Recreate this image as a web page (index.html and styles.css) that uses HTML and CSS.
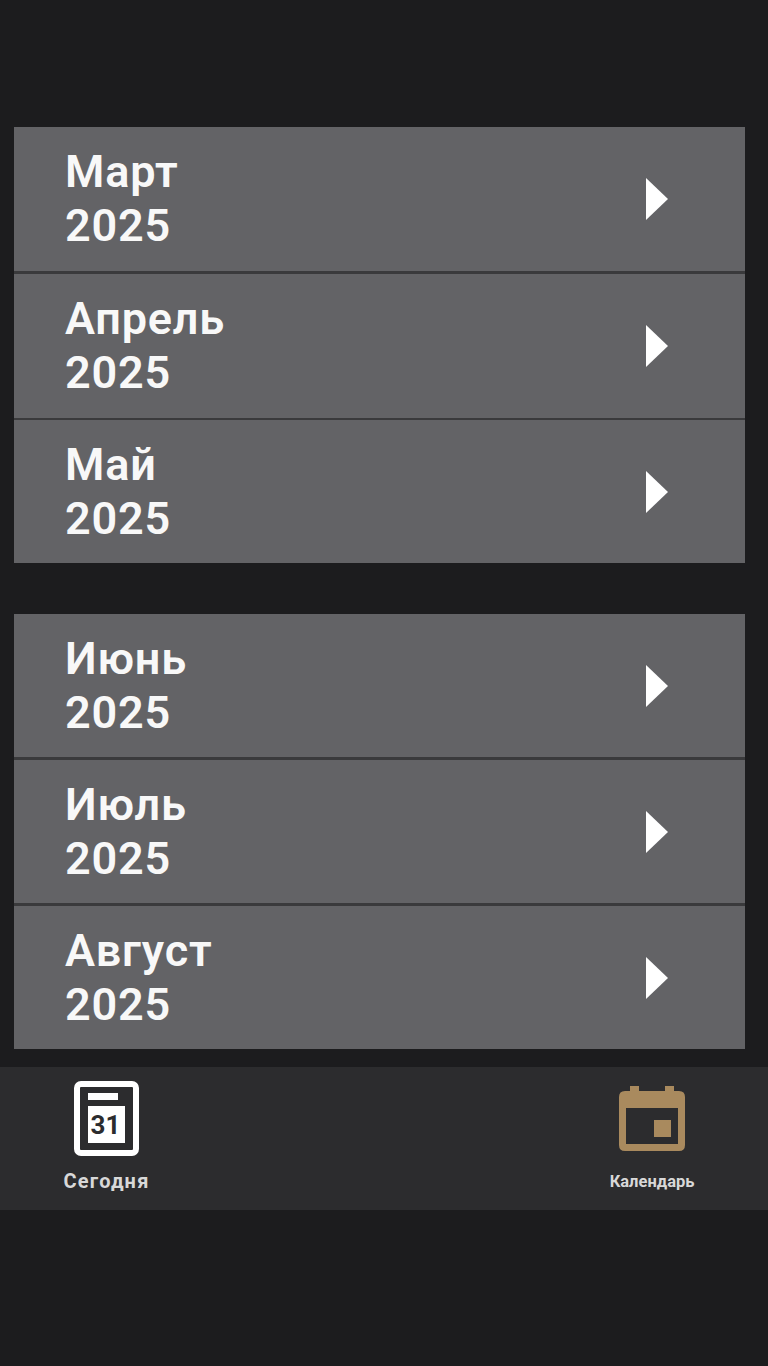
FILE: index.html
```html
<!DOCTYPE html>
<html lang="ru">
<head>
    <meta charset="UTF-8">
    <meta name="viewport" content="width=device-width, initial-scale=1.0">
    <title>Календарь</title>
    <link rel="stylesheet" href="styles.css">
</head>
<body>
    <div class="screen">
        <div class="month-group first">
            <div class="month-row">
                <div class="month-name">Март<br>2025</div>
                <svg class="arrow" viewBox="0 0 22 42"><path d="M0 0L22 21L0 42Z"/></svg>
            </div>
            <div class="month-row">
                <div class="month-name">Апрель<br>2025</div>
                <svg class="arrow" viewBox="0 0 22 42"><path d="M0 0L22 21L0 42Z"/></svg>
            </div>
            <div class="month-row">
                <div class="month-name">Май<br>2025</div>
                <svg class="arrow" viewBox="0 0 22 42"><path d="M0 0L22 21L0 42Z"/></svg>
            </div>
        </div>
        <div class="month-group second">
            <div class="month-row">
                <div class="month-name">Июнь<br>2025</div>
                <svg class="arrow" viewBox="0 0 22 42"><path d="M0 0L22 21L0 42Z"/></svg>
            </div>
            <div class="month-row">
                <div class="month-name">Июль<br>2025</div>
                <svg class="arrow" viewBox="0 0 22 42"><path d="M0 0L22 21L0 42Z"/></svg>
            </div>
            <div class="month-row">
                <div class="month-name">Август<br>2025</div>
                <svg class="arrow" viewBox="0 0 22 42"><path d="M0 0L22 21L0 42Z"/></svg>
            </div>
        </div>
        <div class="tabbar">
            <div class="tab tab-today">
                <svg class="tab-icon" width="65" height="75" viewBox="0 0 65 75">
                    <rect x="3" y="3" width="59" height="69" rx="4" class="today-frame"/>
                    <rect x="14" y="12" width="30" height="7" class="today-fill"/>
                    <rect x="14" y="25" width="37" height="37" class="today-fill"/>
                    <text x="31.5" y="53" class="today-num">31</text>
                </svg>
                <span class="tab-label">Сегодня</span>
            </div>
            <div class="tab tab-calendar">
                <svg class="tab-icon" width="66" height="65" viewBox="0 0 66 65">
                    <path class="cal-fill" d="M11 0H20V6H11ZM46 0H55V6H46Z"/>
                    <path class="cal-fill" fill-rule="evenodd" d="M6 5H60Q66 5 66 11V59Q66 65 60 65H6Q0 65 0 59V11Q0 5 6 5ZM7 22V58H59V22ZM35 34H52V51H35Z"/>
                </svg>
                <span class="tab-label small">Календарь</span>
            </div>
        </div>
    </div>
</body>
</html>
```

FILE: styles.css
```css
body {
    margin: 0;
    padding: 0;
    background-color: #1c1c1e;
    font-family: Roboto, "Liberation Sans", sans-serif;
}
.screen {
    height: 1366px;
    padding-top: 127px;
    box-sizing: border-box;
    overflow: hidden;
}
.month-group {
    margin: 0 23.5px 0 14px;
    background-color: #3a3a3c;
}
.month-group.second {
    margin-top: 51px;
}
.month-row {
    height: 143px;
    display: flex;
    align-items: center;
    justify-content: space-between;
    padding: 0 77px 0 52px;
    background-color: #636366;
}
.month-row + .month-row {
    margin-top: 3px;
}
.first .month-row:nth-child(-n+2) {
    height: 144px;
}
.first .month-row:nth-child(3) {
    margin-top: 2px;
}
.month-name {
    color: #f8f8f8;
    font-size: 45px;
    font-weight: 600;
    letter-spacing: 0.8px;
    line-height: 54px;
    margin-left: -1px;
}
.arrow {
    width: 22px;
    height: 42px;
    fill: #fff;
}
.tabbar {
    margin-top: 18px;
    height: 143px;
    display: flex;
    justify-content: space-between;
    background-color: #2c2c2e;
}
.tab {
    width: 100px;
    display: flex;
    flex-direction: column;
    align-items: center;
    padding-top: 14px;
}
.tab-today {
    margin-left: 56.5px;
}
.tab-calendar {
    margin-right: 66px;
}
.tab-calendar .tab-icon {
    margin-top: 5px;
    margin-bottom: 6px;
}
.tab-label {
    margin-top: 13px;
    color: #d8d8d8;
    font-size: 20px;
    font-weight: 700;
    letter-spacing: 1.2px;
    line-height: 24px;
    white-space: nowrap;
}
.tab-label.small {
    font-size: 16.5px;
    letter-spacing: 0;
}
.today-frame {
    fill: none;
    stroke: #fff;
    stroke-width: 6;
}
.today-fill {
    fill: #fff;
}
.today-num {
    fill: #2c2c2e;
    font-size: 26px;
    font-weight: 700;
    text-anchor: middle;
}
.cal-fill {
    fill: #a98a5e;
}
```
